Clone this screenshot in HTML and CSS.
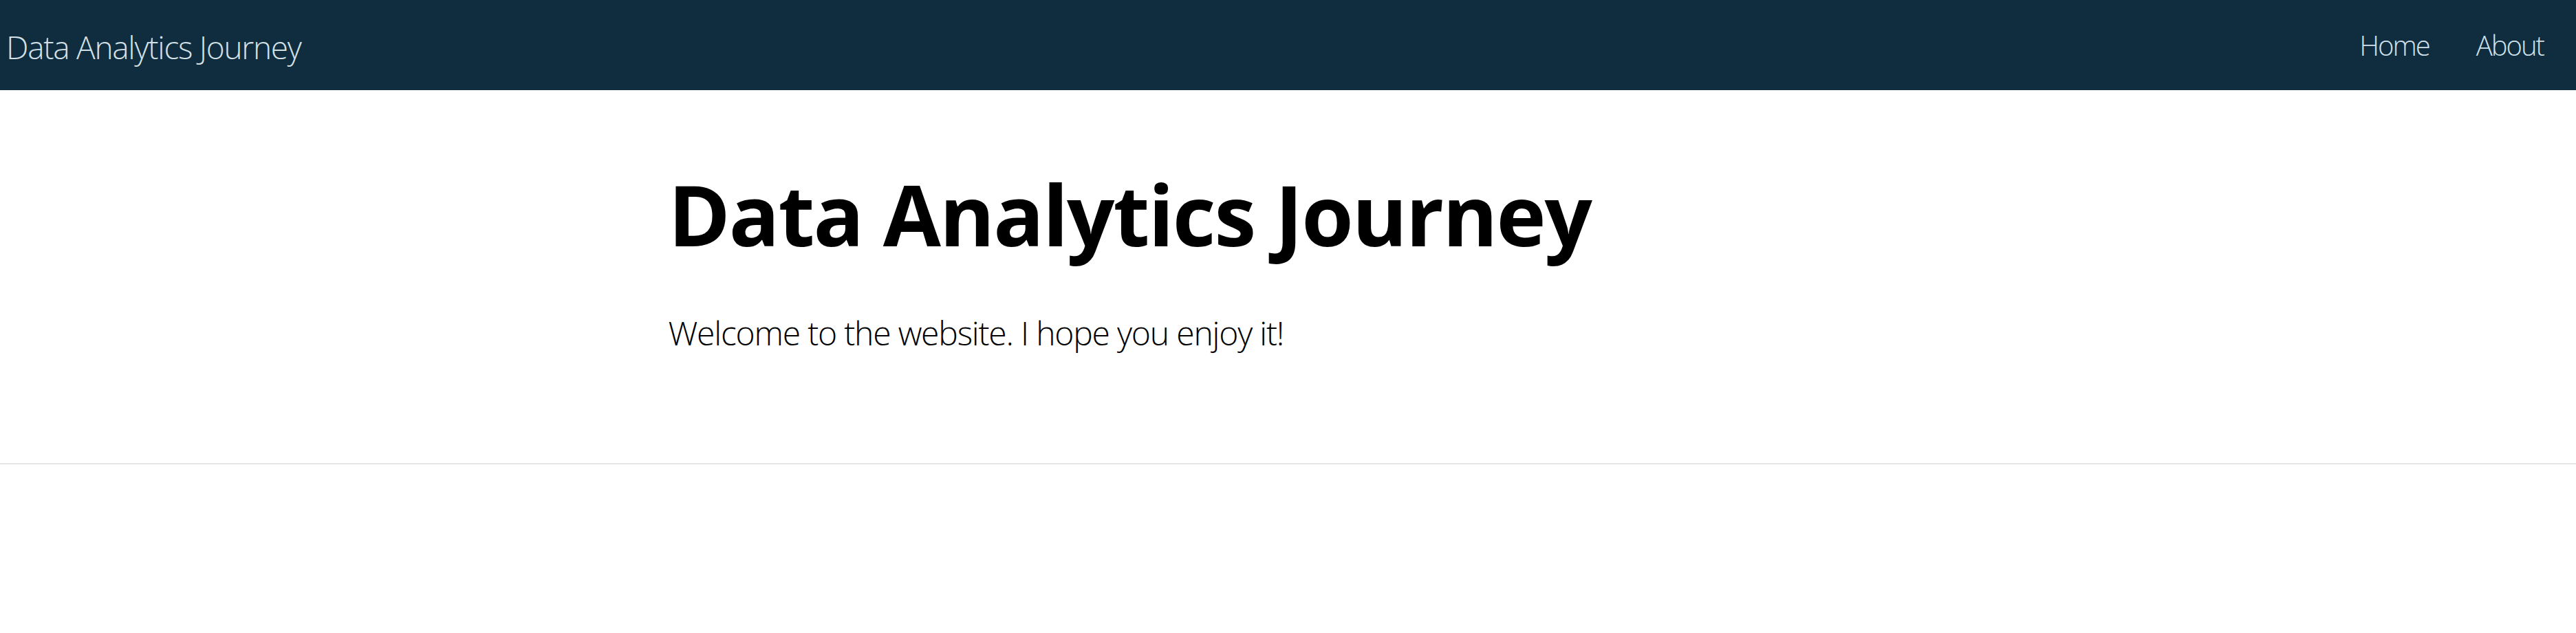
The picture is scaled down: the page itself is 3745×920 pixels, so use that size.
FILE: index.html
```html
<!DOCTYPE html>
<html lang="en">
<head>
<meta charset="utf-8">
<title>Data Analytics Journey</title>
<link rel="stylesheet" href="styles.css">
</head>
<body>
<nav class="navbar">
  <a class="brand" href="#">Data Analytics Journey</a>
  <ul class="nav-links">
    <li><a href="#">Home</a></li>
    <li><a href="#">About</a></li>
  </ul>
</nav>
<header class="jumbotron">
  <div class="container">
    <h1 class="title">Data Analytics Journey</h1>
    <p class="lead">Welcome to the website. I hope you enjoy it!</p>
  </div>
</header>
<hr class="divider">
</body>
</html>
```
FILE: styles.css
```css
html, body {
  margin: 0;
  padding: 0;
  background: #ffffff;
  font-family: "Open Sans", "Noto Sans", "DejaVu Sans", sans-serif;
}

.navbar {
  height: 131px;
  background: #0f2d3f;
  display: flex;
  align-items: center;
  justify-content: space-between;
  padding: 0 47px 0 9px;
  box-sizing: border-box;
}

.brand {
  color: #d3e0e6;
  font-weight: 300;
  font-size: 46px;
  letter-spacing: -1.3px;
  text-decoration: none;
  line-height: 1;
  padding-top: 4px;
}

.nav-links {
  list-style: none;
  margin: 0;
  padding: 0;
  display: flex;
  gap: 68px;
}

.nav-links a {
  color: #cfe0ea;
  font-weight: 300;
  font-size: 40px;
  letter-spacing: -2px;
  text-decoration: none;
  line-height: 1;
}

.jumbotron {
  padding: 107px 0 153px;
}

.container {
  width: 1802px;
  margin: 0 auto;
}

.title {
  margin: 0;
  font-size: 122px;
  font-weight: 700;
  letter-spacing: -2px;
  line-height: 1.2;
  color: #000000;
}

.lead {
  margin: 64px 0 0;
  font-size: 48px;
  font-weight: 300;
  letter-spacing: -1.2px;
  line-height: 1.5;
  color: #000000;
}

.divider {
  margin: 0;
  border: 0;
  height: 2px;
  background: #e5e5e5;
}
```
